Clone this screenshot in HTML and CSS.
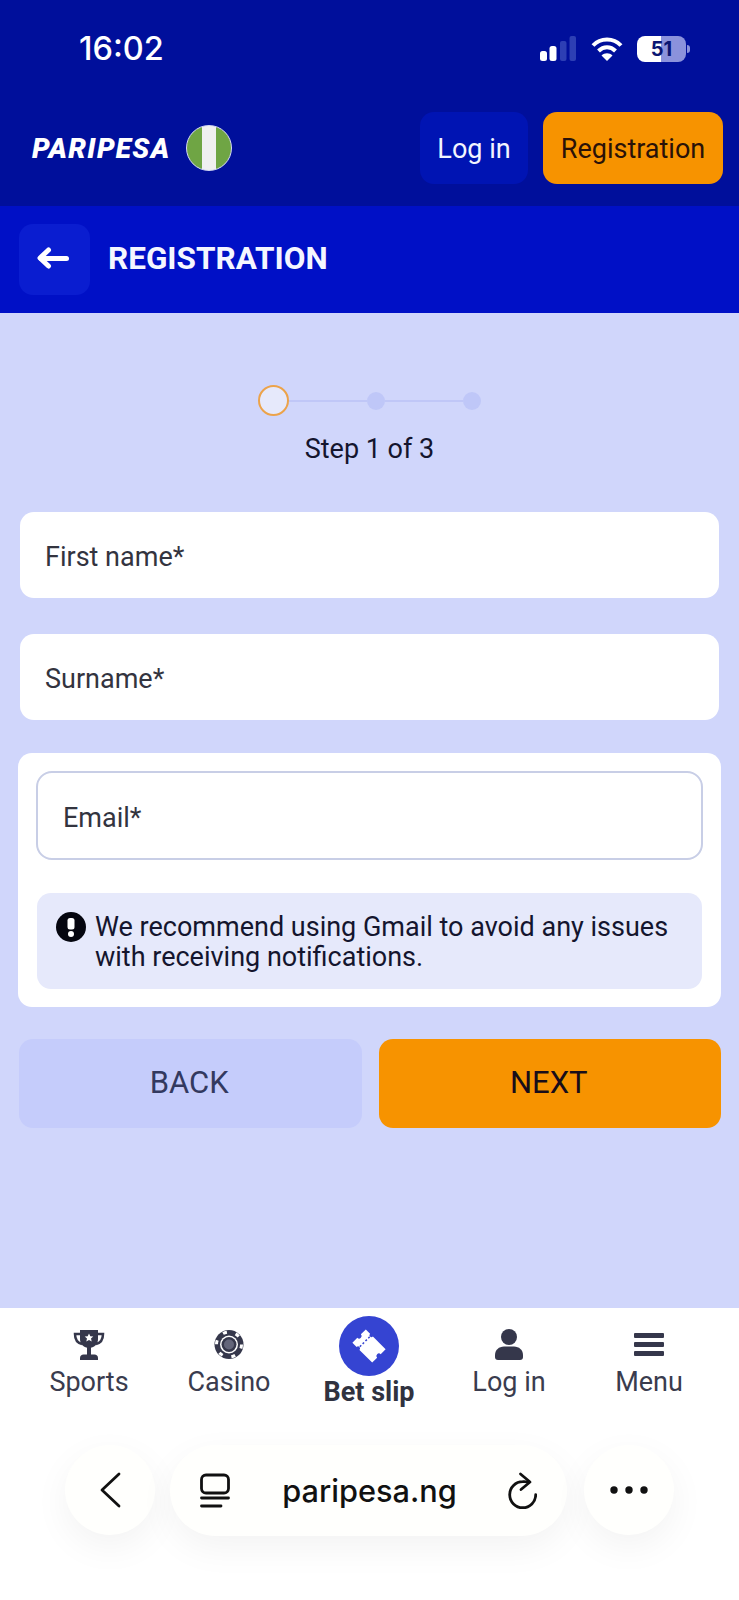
FILE: index.html
```html
<!DOCTYPE html>
<html lang="en">
<head>
    <meta charset="UTF-8">
    <meta name="viewport" content="width=device-width, initial-scale=1.0">
    <title>Registration</title>
    <link rel="stylesheet" href="styles.css">
</head>
<body>
    <div class="top">
        <div class="status-bar">
            <span class="time">16:02</span>
            <div class="status-icons">
                <svg class="signal" width="36" height="25" viewBox="0 0 36 25">
                    <rect x="0" y="15" width="7" height="10" rx="2.5" fill="#fff"/>
                    <rect x="9.500" y="10" width="7" height="15" rx="2.5" fill="#fff"/>
                    <rect x="20" y="5" width="6.500" height="20" rx="2" fill="#2d3fb4"/>
                    <rect x="29.500" y="0" width="6.500" height="25" rx="2" fill="#2d3fb4"/>
                </svg>
                <svg class="wifi" width="32" height="25" viewBox="0 0 32 25" fill="none" stroke="#fff" stroke-width="4">
                    <path d="M2 9.500C9.500 1.500 22.500 1.500 30 9.500"/>
                    <path d="M7.500 15C12.500 10 19.500 10 24.500 15"/>
                    <path d="M16 25l-5.500-5.500C13.500 16.500 18.500 16.500 21.500 19.500z" fill="#fff" stroke="none"/>
                </svg>
                <div class="battery"><span>51</span></div>
                <div class="battery-nub"></div>
            </div>
        </div>
        <div class="header">
            <div class="brand">
                <span class="logo">PARIPESA</span>
                <div class="flag"></div>
            </div>
            <div class="header-actions">
                <button class="btn-login">Log in</button>
                <button class="btn-register">Registration</button>
            </div>
        </div>
    </div>

    <div class="subheader">
        <div class="back-square">
            <svg class="back-arrow" width="32" height="24" viewBox="0 0 32 24" fill="none" stroke="#fff" stroke-width="5" stroke-linecap="round" stroke-linejoin="round">
                <path d="M29.500 12.500H4"/>
                <path d="M11.500 4L3 12l8.500 8"/>
            </svg>
        </div>
        <h1>REGISTRATION</h1>
    </div>

    <main class="content">
        <div class="stepper">
            <span class="step-current"></span>
            <span class="step-line"></span>
            <span class="step-dot"></span>
            <span class="step-line"></span>
            <span class="step-dot"></span>
        </div>
        <div class="step-label">Step 1 of 3</div>

        <div class="field">First name*</div>
        <div class="field field-next">Surname*</div>

        <div class="email-card">
            <div class="email-input">Email*</div>
            <div class="notice">
                <svg class="notice-icon" width="30" height="30" viewBox="0 0 30 30">
                    <circle cx="15" cy="15" r="15" fill="#05060f"/>
                    <rect x="11.500" y="6" width="7" height="11.500" rx="2.500" fill="#fff"/>
                    <circle cx="15" cy="22" r="3" fill="#fff"/>
                </svg>
                <p>We recommend using Gmail to avoid any issues with receiving notifications.</p>
            </div>
        </div>

        <div class="form-actions">
            <button class="btn-back">BACK</button>
            <button class="btn-next">NEXT</button>
        </div>
    </main>

    <div class="bottom">
        <nav class="tabbar">
            <div class="tab">
                <svg width="32" height="31" viewBox="0 0 32 31">
                    <path d="M8 5H2c0 6 2.500 9 7 10M24 5h6c0 6-2.500 9-7 10" fill="none" stroke="#35374b" stroke-width="2.500"/>
                    <path d="M7 1h18v9c0 5.500-4 9-9 9s-9-3.500-9-9z" fill="#35374b"/>
                    <rect x="14" y="18" width="4" height="8" fill="#35374b"/>
                    <path d="M7 31v-2c0-2 1.500-3.500 3.500-3.500h11c2 0 3.500 1.500 3.500 3.500v2z" fill="#35374b"/>
                    <path d="M16 4.500l1.300 2.800 3 .3-2.300 2 .7 3-2.700-1.600-2.700 1.600.7-3-2.300-2 3-.3z" fill="#fff"/>
                </svg>
                <span>Sports</span>
            </div>
            <div class="tab">
                <svg width="30" height="31" viewBox="0 0 30 30">
                    <circle cx="15" cy="15" r="14.500" fill="#35374b"/>
                    <circle cx="15" cy="15" r="12.500" fill="none" stroke="#fff" stroke-width="3" stroke-dasharray="4 9.090"/>
                    <circle cx="15" cy="15" r="9" fill="#fff"/>
                    <circle cx="15" cy="15" r="7.500" fill="#35374b"/>
                    <circle cx="15" cy="15" r="5" fill="#63657a"/>
                </svg>
                <span>Casino</span>
            </div>
            <div class="tab tab-active">
                <div class="betslip-circle">
                    <svg width="60" height="60" viewBox="0 0 60 60">
                        <g transform="rotate(45 30 30)">
                            <path d="M16 20.500h6a2 2 0 0 0 4 0h18v7a2.500 2.500 0 0 0 0 5v7h-18a2 2 0 0 0-4 0h-6v-7a2.500 2.500 0 0 0 0-5z" fill="#fff"/>
                            <path d="M24 23v14" stroke="#3544d2" stroke-width="1.500" stroke-dasharray="2 2"/>
                        </g>
                    </svg>
                </div>
                <span>Bet slip</span>
            </div>
            <div class="tab">
                <svg width="28" height="31" viewBox="0 0 28 31">
                    <circle cx="14" cy="8" r="8" fill="#35374b"/>
                    <path d="M0 28v-2c0-5 4-8.500 9-8.500h10c5 0 9 3.500 9 8.500v2c0 2-1 3-3 3H3c-2 0-3-1-3-3z" fill="#35374b"/>
                </svg>
                <span>Log in</span>
            </div>
            <div class="tab">
                <svg width="30" height="31" viewBox="0 0 30 31">
                    <rect x="0" y="4" width="30" height="5" rx="1" fill="#35374b"/>
                    <rect x="0" y="13" width="30" height="5" rx="1" fill="#35374b"/>
                    <rect x="0" y="22" width="30" height="5" rx="1" fill="#35374b"/>
                </svg>
                <span>Menu</span>
            </div>
        </nav>

        <div class="browser-bar">
            <div class="round-btn">
                <svg width="22" height="36" viewBox="0 0 22 36" fill="none" stroke="#111" stroke-width="2.800" stroke-linecap="round" stroke-linejoin="round">
                    <path d="M20 2L3 18l17 16"/>
                </svg>
            </div>
            <div class="url-pill">
                <svg width="30" height="35" viewBox="0 0 30 35" fill="none" stroke="#111" stroke-width="2.800" stroke-linecap="round">
                    <rect x="1.500" y="2" width="27" height="18" rx="4.500"/>
                    <path d="M1.500 25H28.500"/>
                    <path d="M1.500 33H21"/>
                </svg>
                <span class="url">paripesa.ng</span>
                <svg width="30" height="38" viewBox="0 0 30 38" fill="none" stroke="#111" stroke-width="2.800" stroke-linecap="round" stroke-linejoin="round">
                    <path d="M21 10C19.500 9.700 17.500 9.500 15.700 9.700A13 13 0 1 0 28.700 22.700"/>
                    <path d="M13.500 2L23 10l-9 7.500"/>
                </svg>
            </div>
            <div class="round-btn">
                <svg width="38" height="8" viewBox="0 0 38 8" fill="#111">
                    <circle cx="4" cy="4" r="3.700"/>
                    <circle cx="19" cy="4" r="3.700"/>
                    <circle cx="34" cy="4" r="3.700"/>
                </svg>
            </div>
        </div>
    </div>
</body>
</html>
```

FILE: styles.css
```css
* {
    box-sizing: border-box;
}

body {
    margin: 0;
    height: 1600px;
    overflow: hidden;
    background: #fff;
    color: #14152e;
    font-family: Roboto, 'Liberation Sans', sans-serif;
}

button {
    border: none;
    font-family: inherit;
    padding: 0;
}

.top {
    background: #000f9b;
    height: 206px;
    color: #fff;
}

.status-bar {
    height: 100px;
    display: flex;
    justify-content: space-between;
    padding: 36px 49px 0 79px;
}

.time {
    font-family: Inter, Roboto, sans-serif;
    font-size: 32.500px;
    font-weight: 500;
    line-height: 26px;
}

.status-icons {
    display: flex;
    align-items: flex-start;
}

.wifi {
    margin-left: 15px;
}

.battery {
    width: 49px;
    height: 26px;
    margin-left: 14px;
    border-radius: 8px;
    background: linear-gradient(90deg, #fff 50%, #8b92dc 50%);
    color: #0a1672;
    font-family: Inter, Roboto, sans-serif;
    font-size: 20px;
    font-weight: 700;
    line-height: 26px;
    text-align: center;
}

.battery-nub {
    width: 3px;
    height: 8px;
    margin: 9px 0 0 1px;
    border-radius: 0 3px 3px 0;
    background: #8b92dc;
}

.header {
    height: 106px;
    display: flex;
    justify-content: space-between;
    padding: 12px 16px 0 32px;
}

.brand {
    display: flex;
    align-items: center;
    height: 72px;
}

.logo {
    font-size: 28px;
    font-weight: 900;
    font-style: italic;
    letter-spacing: 1.300px;
}

.flag {
    width: 46px;
    height: 46px;
    margin-left: 16px;
    border-radius: 50%;
    border: 1px solid #d8dcf5;
    background: linear-gradient(90deg, #6fa544 33%, #f0f0f0 33%, #f0f0f0 67%, #6fa544 67%);
}

.header-actions {
    display: flex;
    gap: 15px;
}

.btn-login,
.btn-register {
    height: 72px;
    padding-top: 1px;
    border-radius: 14px;
    font-size: 27px;
}

.btn-login {
    width: 108px;
    background: #0014b3;
    color: #f2f4ff;
}

.btn-register {
    width: 180px;
    background: #f79300;
    color: #2a1208;
}

.subheader {
    height: 107px;
    background: #0010c6;
    display: flex;
    align-items: center;
    padding-left: 19px;
}

.back-square {
    width: 71px;
    height: 71px;
    border-radius: 14px;
    background: #0a1dd0;
    display: flex;
    align-items: center;
    justify-content: center;
}

.back-arrow {
    margin: 0 3px 4px 0;
}

.subheader h1 {
    margin: 0 0 2px 18px;
    color: #f4f6ff;
    font-size: 31.500px;
    font-weight: 700;
}

.content {
    height: 995px;
    background: #d0d6fb;
    padding: 72px 20px 0;
}

.stepper {
    display: flex;
    align-items: center;
    justify-content: center;
}

.step-current {
    width: 31px;
    height: 31px;
    border-radius: 50%;
    border: 2px solid #eca34a;
    background: #e6e9fb;
}

.step-line {
    width: 78px;
    height: 2px;
    background: #c0c7f7;
}

.step-dot {
    width: 18px;
    height: 18px;
    border-radius: 50%;
    background: #bfc7f8;
}

.step-label {
    margin-top: 17px;
    font-size: 27px;
    line-height: 32px;
    text-align: center;
}

.field {
    height: 86px;
    margin-top: 47px;
    padding-left: 25px;
    border-radius: 14px;
    background: #fff;
    color: #33343f;
    font-size: 27px;
    line-height: 90px;
}

.field-next {
    margin-top: 36px;
}

.email-card {
    margin: 33px -2px 0 -2px;
    padding: 18px;
    height: 254px;
    border-radius: 14px;
    background: #fff;
}

.email-input {
    height: 89px;
    padding-left: 25px;
    border: 2px solid #c8cee6;
    border-radius: 16px;
    color: #33343f;
    font-size: 27px;
    line-height: 90px;
}

.notice {
    display: flex;
    gap: 9px;
    height: 96px;
    margin: 33px 1px 0;
    padding: 19px 19px 0;
    border-radius: 14px;
    background: #e6e9fb;
}

.notice-icon {
    flex: none;
}

.notice p {
    margin: 0;
    font-size: 27px;
    line-height: 30px;
}

.form-actions {
    display: grid;
    grid-template-columns: 1fr 1fr;
    gap: 17px;
    margin: 32px -2px 0 -1px;
}

.btn-back,
.btn-next {
    height: 89px;
    padding: 0 2px 2px 0;
    border-radius: 14px;
    font-size: 31px;
}

.btn-back {
    background: #c5ccfb;
    color: #33395f;
}

.btn-next {
    background: #f79300;
    color: #180d1a;
}

.bottom {
    height: 292px;
    background: #fff;
}

.tabbar {
    display: grid;
    grid-template-columns: repeat(5, 140px);
    padding-left: 19px;
    height: 137px;
}

.tab {
    display: flex;
    flex-direction: column;
    align-items: center;
    padding-top: 21px;
    color: #3a3c4e;
    font-size: 27px;
    line-height: 32px;
}

.tab svg {
    display: block;
    margin-bottom: 6px;
}

.tab-active {
    padding-top: 8px;
    color: #30323f;
    font-weight: 700;
}

.betslip-circle {
    width: 60px;
    height: 60px;
    border-radius: 50%;
    background: #3544d2;
}

.betslip-circle svg {
    margin: 0;
}

.browser-bar {
    display: flex;
    gap: 16px;
    padding-left: 65px;
}

.round-btn {
    width: 90px;
    height: 90px;
    border-radius: 50%;
    background: #fffffd;
    box-shadow: 0 12px 36px rgba(0, 0, 0, 0.05);
    display: flex;
    align-items: center;
    justify-content: center;
}

.url-pill {
    width: 397px;
    height: 91px;
    margin-left: -1px;
    margin-right: 1px;
    border-radius: 46px;
    background: #fffffd;
    box-shadow: 0 12px 36px rgba(0, 0, 0, 0.05);
    display: flex;
    align-items: center;
    justify-content: space-between;
    padding: 0 30px;
}

.url {
    margin-left: 2px;
    color: #111;
    font-family: Inter, Roboto, sans-serif;
    font-size: 30.700px;
    font-weight: 500;
}
```
